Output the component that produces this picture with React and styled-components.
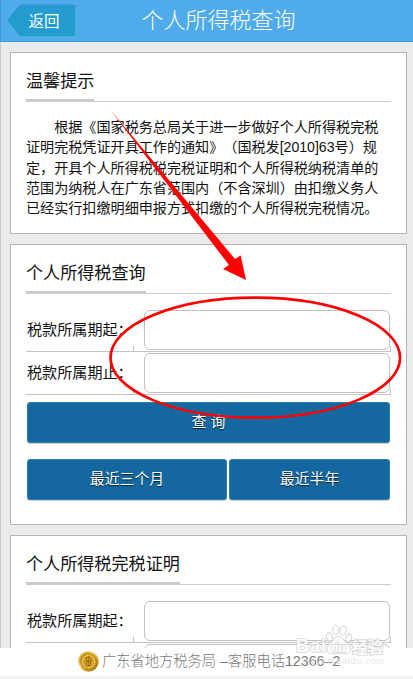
import styled, { createGlobalStyle } from "styled-components";

const GlobalStyle = createGlobalStyle`
  * {
    box-sizing: border-box;
  }
  body {
    margin: 0;
    background: #ebebeb;
    font-family: "Liberation Sans", "Noto Sans CJK SC", sans-serif;
    color: #111;
    text-spacing-trim: space-all;
  }
`;

const Page = styled.div`
  position: relative;
  display: flex;
  flex-direction: column;
  width: 413px;
  height: 679px;
  overflow: hidden;
`;

const Header = styled.header`
  display: grid;
  grid-template-columns: 70px 1fr 45px;
  align-items: center;
  flex: none;
  height: 42px;
  padding-left: 6px;
  background: #4fabe9;
  border-bottom: 1px solid #30a5db;
  border-left: 1px solid #3f9bd3;

  h1 {
    margin: 0;
    padding-right: 8px;
    justify-self: center;
    color: #fff;
    font-size: 22px;
    font-weight: 300;
    line-height: 38px;
    white-space: nowrap;
  }
`;

const BackButton = styled.a`
  display: grid;
  width: 70px;
  height: 34px;
  color: #fff;
  font-size: 15.5px;
  line-height: 35px;

  svg,
  span {
    grid-area: 1 / 1;
  }
  span {
    padding-left: 21.5px;
    z-index: 1;
  }
`;

const Main = styled.main`
  display: flex;
  flex-direction: column;
  flex: 1;
  min-height: 0;
  gap: 10px;
  padding: 10px 6px 0 9px;
  overflow: hidden;
  border-left: 1px solid #cbcbcb;
`;

const Card = styled.section`
  flex: none;
  height: ${({ $height }) => $height}px;
  padding: 15px 15px 0;
  background: #fff;
  border: 1px solid #b5b5b5;
`;

const CardTitle = styled.h2`
  display: flex;
  align-items: flex-end;
  height: 34px;
  margin: 0;
  border-bottom: 1px solid #ccc;
  font-size: 17.1px;
  font-weight: 400;

  span {
    height: 33px;
    line-height: 28px;
    border-bottom: 2px solid #ccc;
    white-space: nowrap;
  }
`;

const Notice = styled.p`
  margin: 15px 0 0;
  font-size: 14.1px;
  line-height: 20.3px;

  span {
    display: block;
    white-space: nowrap;
  }
  span:first-child {
    padding-left: 28.2px;
  }
`;

const Fields = styled.div`
  display: flex;
  flex-direction: column;
  margin-top: 15px;
`;

const Field = styled.div`
  display: grid;
  grid-template-columns: 108px 10px 247px;
  height: 43px;
  border-bottom: 1px solid #c4c4c4;

  label {
    padding-left: 1px;
    font-size: 15.1px;
    line-height: 41px;
    white-space: nowrap;
    background: linear-gradient(#c4c4c4, #c4c4c4) right bottom / 1px 5px no-repeat;
  }
  b {
    font-weight: 400;
  }
`;

const InputCell = styled.div`
  display: flex;
  align-items: flex-start;
  grid-column: 3;
  height: 42px;
  padding-top: 1px;
  background: linear-gradient(#c4c4c4, #c4c4c4) right bottom / 1px 5px no-repeat;

  input {
    width: 246px;
    height: 40px;
    padding: 0 8px;
    background: #fff;
    border: 1px solid #c0c0c0;
    border-radius: 6px;
    outline: none;
  }
`;

const Actions = styled.div`
  display: grid;
  grid-template-columns: ${({ $columns }) => $columns};
  gap: 2px;
  margin: ${({ $top }) => $top}px 0 0 1px;
  width: 363px;
`;

const Button = styled.button`
  height: 41px;
  padding: 0;
  background: #14689f;
  border: 1px solid #2b7ead;
  border-radius: 3px;
  box-shadow: 0 1px 1px rgba(0, 0, 0, 0.2);
  color: #fff;
  font-family: inherit;
  font-size: 14.9px;
  line-height: 37px;
  text-shadow: 0 1px 1px rgba(0, 0, 0, 0.7);
`;

const Footer = styled.footer`
  display: flex;
  align-items: center;
  flex: none;
  height: 31px;
  padding: 0 0 2px 78px;
  background: #fff;
  border-bottom: 3px solid #f4f4f4;
  color: #777;
  font-size: 14.25px;
  font-weight: 300;
  line-height: 26px;
  white-space: nowrap;

  svg {
    flex: none;
    margin-right: 3px;
  }
`;

// hand-drawn marks and the site stamp lie over the whole page
const Overlay = styled.svg`
  position: absolute;
  inset: 0;
  pointer-events: none;

  text {
    paint-order: stroke;
  }
`;

const notice = [
  "根据《国家税务总局关于进一步做好个人所得税完税",
  "证明完税凭证开具工作的通知》（国税发[2010]63号）规",
  "定，开具个人所得税税完税证明和个人所得税纳税清单的",
  "范围为纳税人在广东省范围内（不含深圳）由扣缴义务人",
  "已经实行扣缴明细申报方式扣缴的个人所得税完税情况。",
];

const PeriodFields = () => (
  <Fields>
    {["税款所属期起", "税款所属期止"].map((label) => (
      <Field key={label}>
        <label>
          {label}
          <b>：</b>
        </label>
        <InputCell>
          <input type="text" aria-label={label} />
        </InputCell>
      </Field>
    ))}
  </Fields>
);

const Coin = () => (
  <svg width="21" height="21" viewBox="0 0 21 21">
    <defs>
      <linearGradient id="gold" x1="0" y1="0" x2="1" y2="1">
        <stop offset="0" stopColor="#b98718" />
        <stop offset="0.4" stopColor="#f3cf55" />
        <stop offset="0.7" stopColor="#d19a22" />
        <stop offset="1" stopColor="#74500c" />
      </linearGradient>
    </defs>
    <circle cx="10.5" cy="10.5" r="10.2" fill="url(#gold)" />
    <circle cx="10.5" cy="10.5" r="7.8" fill="#d8a327" stroke="#a3720f" strokeWidth="0.8" />
    <circle cx="10.5" cy="10.5" r="6.2" fill="none" stroke="#edcf70" strokeWidth="1.2" strokeDasharray="1.4 0.8" />
    <path d="M8 6.5h5v3H8zM7 11h7M8.5 11v4M12.5 11v4M10.5 5v11M8 14.5h5" fill="none" stroke="#8d6614" strokeWidth="0.7" />
  </svg>
);

const Stamp = () => (
  <g
    fill="#fff"
    stroke="#cfcfcf"
    strokeWidth="1"
    opacity="0.85"
    fontFamily="'Liberation Sans', 'Noto Sans CJK SC', sans-serif"
    fontWeight="700"
  >
    <text x="296" y="652" fontSize="18" strokeWidth="1.6" textLength="30">Bai</text>
    <ellipse cx="329.5" cy="637" rx="2.8" ry="4.2" transform="rotate(-20 329.5 637)" />
    <ellipse cx="335.8" cy="630" rx="3.1" ry="4.6" />
    <ellipse cx="343.2" cy="630.5" rx="3.1" ry="4.6" transform="rotate(10 343.2 630.5)" />
    <ellipse cx="348.8" cy="638" rx="2.8" ry="4.2" transform="rotate(20 348.8 638)" />
    <path d="M338.5 636.5c4 0 5.5 4 8 6.5c4 3.5 4.5 5 3.5 8c-1.5 4-6 3-11.5 2.5c-5.5.5-9 1.5-11-2.5c-1-3.5 0-5 3-8c3-2.5 4-6.5 8-6.5z" />
    <text x="331" y="651.5" fontSize="13" strokeWidth="1.6" textLength="15">du</text>
    <text x="352" y="652.5" fontSize="15.5" strokeWidth="1.6" textLength="31">经验</text>
    <text x="299" y="664" fontSize="9" textLength="85" stroke="none" fill="#e2e2e2" fontWeight="400">jingyan.baidu.com</text>
  </g>
);

const App = () => {
  return (
    <>
      <GlobalStyle />
      <Page lang="zh-CN">
        <Header>
          <BackButton>
            <svg width="70" height="34" viewBox="0 0 70 34">
              <path
                d="M14 1H66Q69 1 69 4V30Q69 33 66 33H14Q12.5 33 11.5 31.5L1 18.5Q0 17 1 15.5L11.5 2.5Q12.5 1 14 1Z"
                fill="#239dcf"
                stroke="#62b9ed"
              />
              <path d="M1.5 15.5L12 2.5Q13 1 14 1H66Q68 1 69 3" fill="none" stroke="#208bc5" />
            </svg>
            <span>返回</span>
          </BackButton>
          <h1>个人所得税查询</h1>
        </Header>

        <Main>
          <Card $height={182}>
            <CardTitle>
              <span>温馨提示</span>
            </CardTitle>
            <Notice>
              {notice.map((line) => (
                <span key={line}>{line}</span>
              ))}
            </Notice>
          </Card>

          <Card $height={281}>
            <CardTitle>
              <span>个人所得税查询</span>
            </CardTitle>
            <PeriodFields />
            <Actions $columns="1fr" $top={7}>
              <Button>查 询</Button>
            </Actions>
            <Actions $columns="200px 161px" $top={16}>
              <Button>最近三个月</Button>
              <Button>最近半年</Button>
            </Actions>
          </Card>

          <Card $height={281}>
            <CardTitle>
              <span>个人所得税完税证明</span>
            </CardTitle>
            <PeriodFields />
          </Card>
        </Main>

        <Footer>
          <Coin />
          广东省地方税务局 –客服电话12366–2
        </Footer>

        <Overlay width="413" height="679" viewBox="0 0 413 679">
          <Stamp />
          <path d="M110.5 110L235 259L240.7 255.5L246 280L223 269L229 265Z" fill="#f00" />
          <ellipse cx="255.3" cy="357.7" rx="144.8" ry="60" fill="none" stroke="#f00" strokeWidth="2.7" />
        </Overlay>
      </Page>
    </>
  );
};

export default App;
